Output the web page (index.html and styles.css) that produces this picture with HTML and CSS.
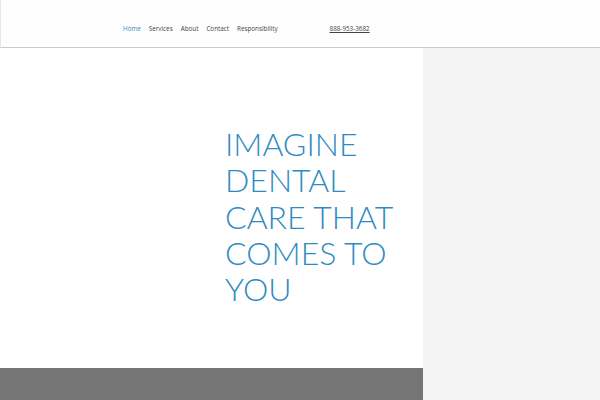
FILE: index.html
```html
<!DOCTYPE html>
<html>
<head>
<meta charset="utf-8">
<link rel="stylesheet" href="styles.css">
</head>
<body>
<header class="header">
  <nav class="nav">
    <a class="nav-link active" href="#">Home</a>
    <a class="nav-link" href="#">Services</a>
    <a class="nav-link" href="#">About</a>
    <a class="nav-link" href="#">Contact</a>
    <a class="nav-link" href="#">Responsibility</a>
  </nav>
  <a class="phone" href="#">888-953-3682</a>
</header>
<main class="main">
  <section class="content">
    <div class="hero">
      <h1 class="title">IMAGINE<br>DENTAL<br>CARE THAT<br>COMES TO<br>YOU</h1>
    </div>
    <div class="band"></div>
  </section>
  <aside class="side"></aside>
</main>
</body>
</html>
```
FILE: styles.css
```css
html, body {
  margin: 0;
  padding: 0;
  width: 600px;
  height: 400px;
  overflow: hidden;
  background: #ffffff;
  font-family: "Open Sans", sans-serif;
}
.header {
  height: 47px;
  border-bottom: 1px solid #c9c9c9;
  border-left: 1px solid #e6e6e6;
  box-sizing: content-box;
  display: flex;
  align-items: center;
  padding-left: 122px;
  background: #fefefe;
}
.nav {
  display: flex;
  gap: 8px;
  margin-top: 9px;
}
.nav-link {
  font-size: 6.3px;
  color: #444444;
  text-decoration: none;
}
.nav-link.active {
  color: #3a8cc1;
}
.phone {
  margin-left: 52px;
  margin-top: 9px;
  font-size: 6.3px;
  color: #444444;
  text-decoration: underline;
}
.main {
  display: flex;
  height: 352px;
}
.content {
  width: 423px;
  display: flex;
  flex-direction: column;
}
.hero {
  flex: 1;
  padding-left: 225px;
  padding-top: 78px;
}
.title {
  margin: 0;
  font-family: "Lato", sans-serif;
  font-weight: 300;
  font-size: 32px;
  line-height: 36.25px;
  color: #2f8bc2;
}
.band {
  height: 32px;
  background: #757575;
}
.side {
  flex: 1;
  background: #f3f3f3;
}
```
